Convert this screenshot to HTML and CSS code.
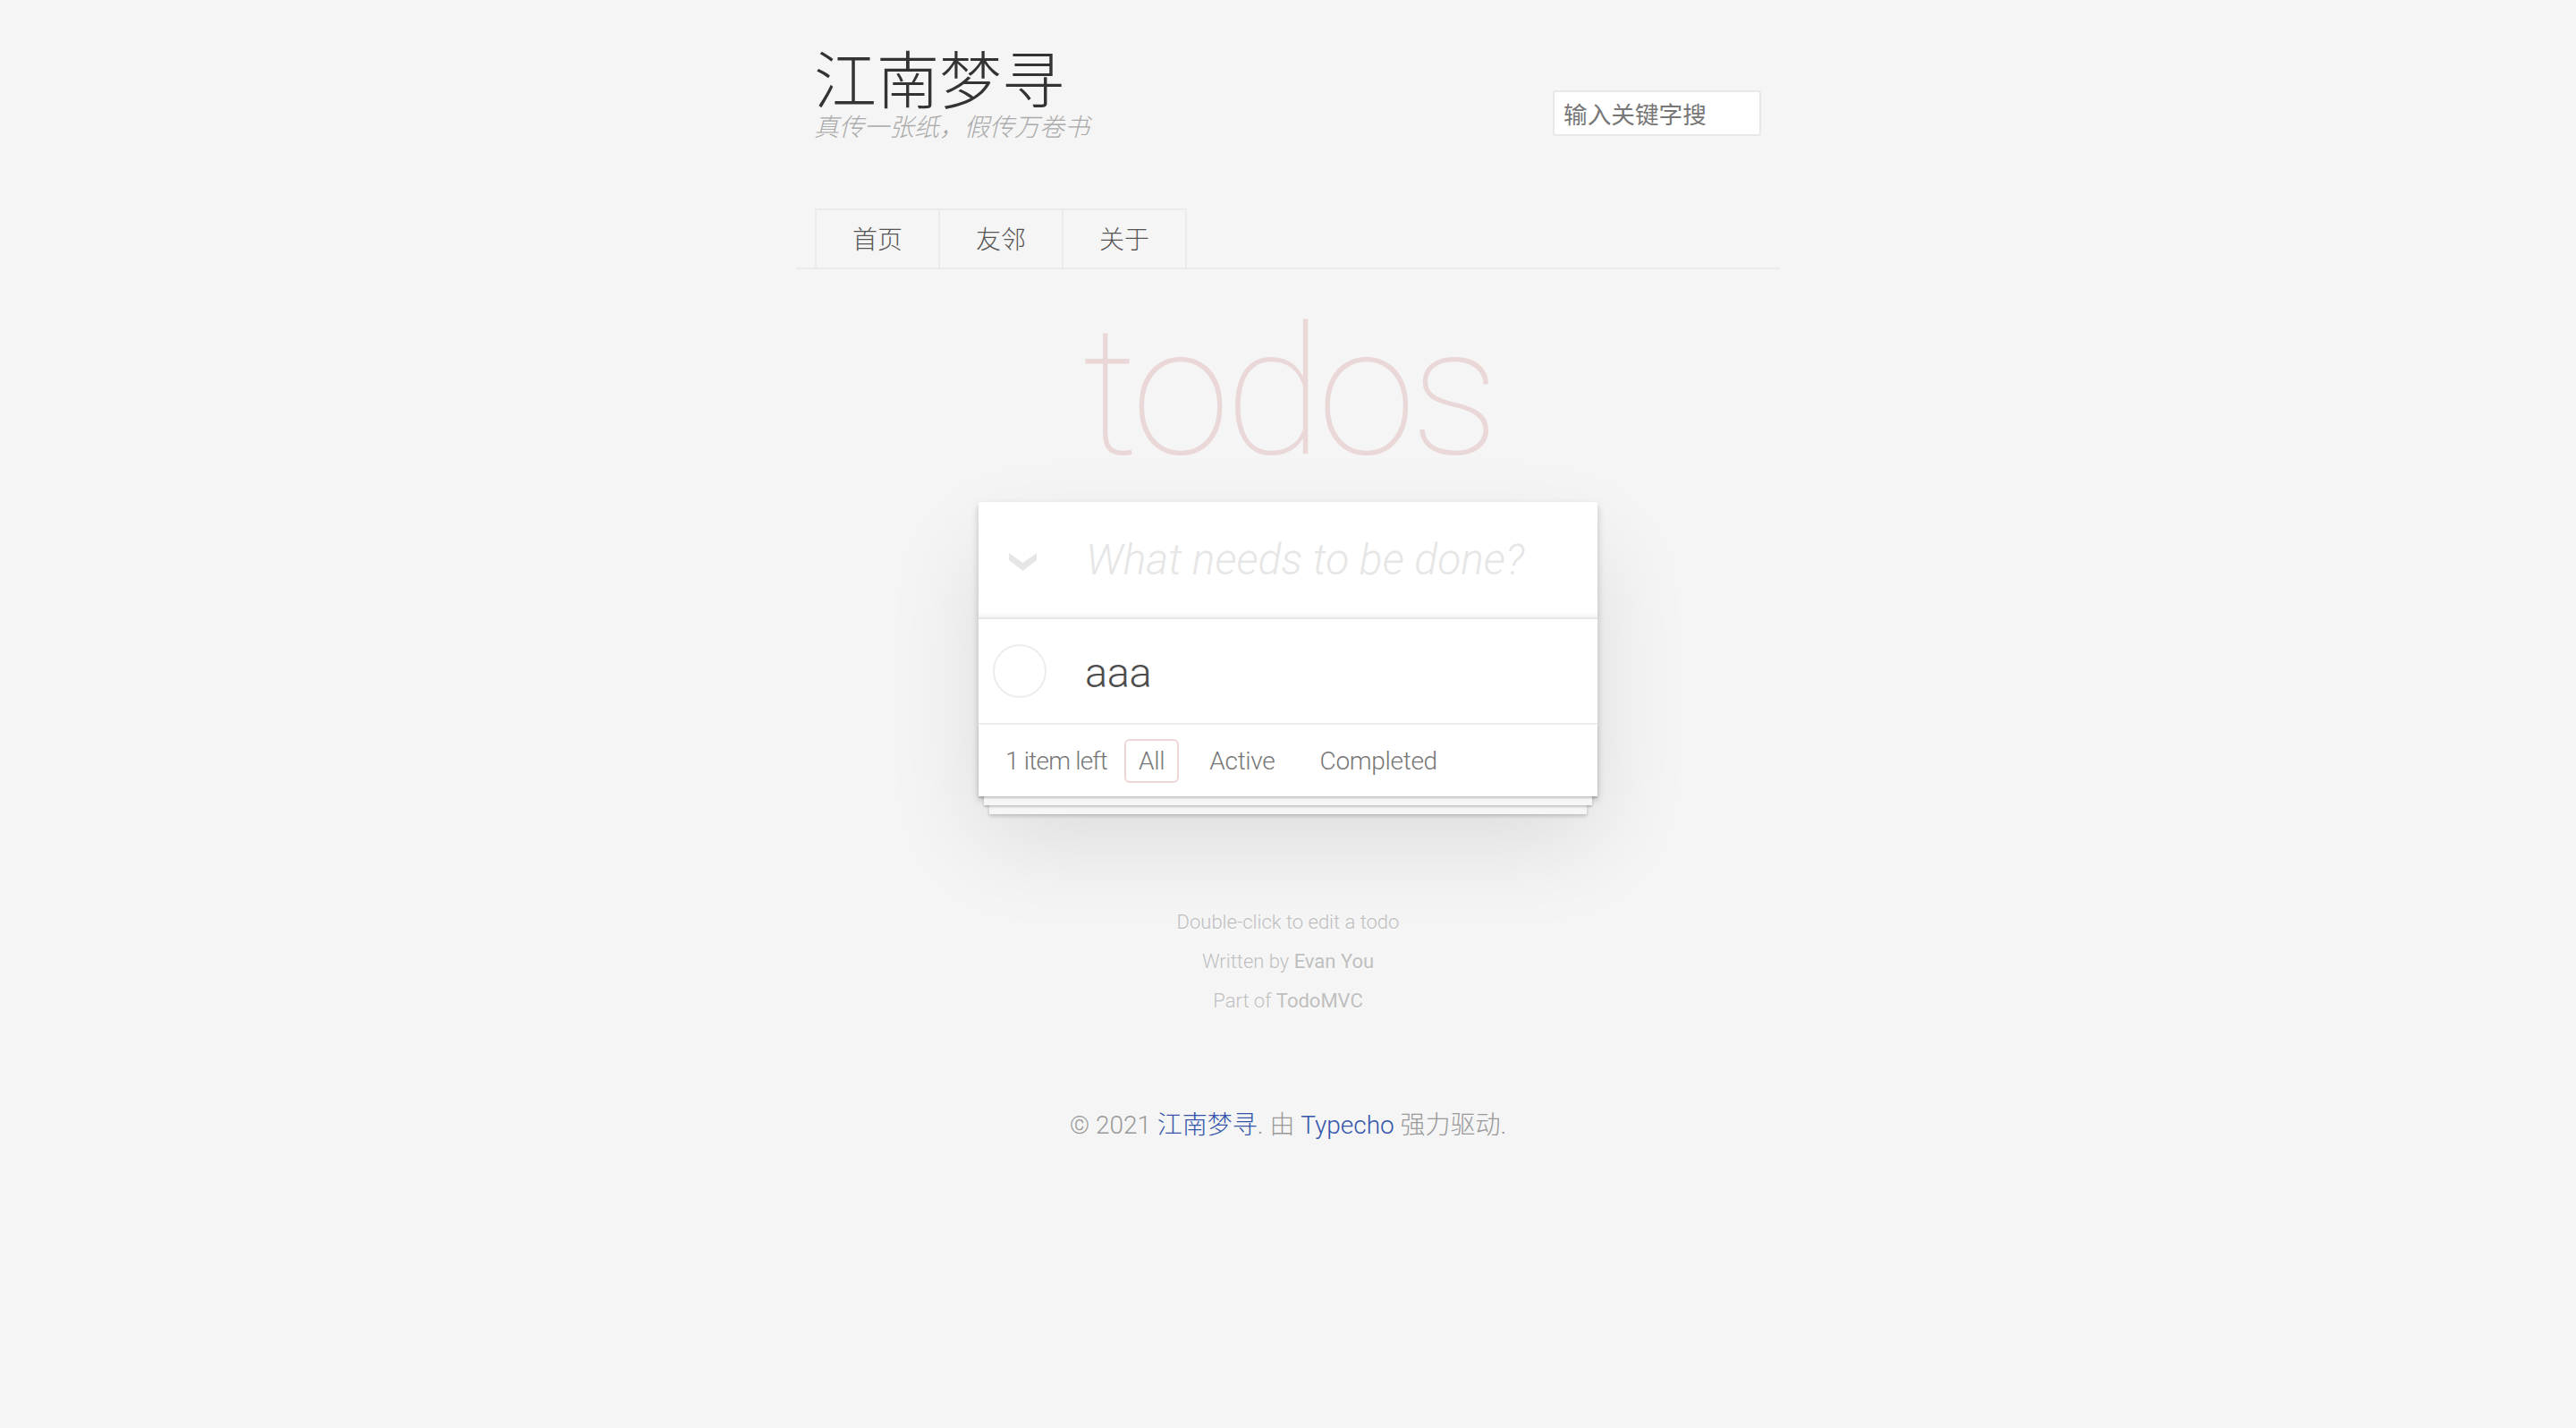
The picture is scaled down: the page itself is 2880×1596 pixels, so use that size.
FILE: index.html
```html
<!DOCTYPE html>
<html lang="zh-CN">
<head>
<meta charset="utf-8">
<title>江南梦寻</title>
<link rel="stylesheet" href="styles.css">
</head>
<body>
<header class="site-header">
  <div class="header-row">
    <div class="brand">
      <a class="logo" href="#">江南梦寻</a>
      <p class="description">真传一张纸，假传万卷书</p>
    </div>
    <form class="search">
      <input class="search-input" type="text" placeholder="输入关键字搜">
    </form>
  </div>
  <nav class="nav-menu">
    <a class="nav-item" href="#">首页</a>
    <a class="nav-item" href="#">友邻</a>
    <a class="nav-item" href="#">关于</a>
  </nav>
</header>

<main class="main">
  <h1 class="todos-title">todos</h1>
  <section class="todoapp">
    <div class="new-row">
      <svg class="toggle-all" width="31" height="20" viewBox="0 0 31 20"><polygon points="0,0 15.5,11 31,0 31,8 15.5,20 0,8" fill="#e6e6e6"/></svg>
      <input class="new-todo" type="text" placeholder="What needs to be done?">
    </div>
    <ul class="todo-list">
      <li class="todo">
        <span class="toggle"></span>
        <label class="todo-label">aaa</label>
      </li>
    </ul>
    <footer class="todo-footer">
      <span class="todo-count">1 item left</span>
      <ul class="filters">
        <li><a class="filter selected" href="#">All</a></li>
        <li><a class="filter" href="#">Active</a></li>
        <li><a class="filter" href="#">Completed</a></li>
      </ul>
      <span></span>
    </footer>
  </section>
  <div class="info">
    <p>Double-click to edit a todo</p>
    <p>Written by <a href="#">Evan You</a></p>
    <p>Part of <a href="#">TodoMVC</a></p>
  </div>
</main>

<footer class="site-footer">
  © 2021 <a class="blue" href="#">江南梦寻</a>. 由 <a class="blue" href="#">Typecho</a> 强力驱动.
</footer>
</body>
</html>
```

FILE: styles.css
```css
html, body {
  margin: 0;
  padding: 0;
}
body {
  background: #f5f5f5;
  color: #444;
  font-family: Roboto, "Noto Sans CJK SC", sans-serif;
  font-weight: 300;
}
a { text-decoration: none; }

.site-header {
  width: 1100px;
  margin: 0 auto;
  padding-top: 51px;
  border-bottom: 2px solid #ebebeb;
  box-sizing: border-box;
}
.header-row {
  display: flex;
  justify-content: space-between;
  align-items: flex-start;
  padding: 0 21px 0 20px;
}
.logo {
  display: block;
  font-family: "Noto Sans CJK SC", sans-serif;
  font-weight: 200;
  font-size: 70px;
  line-height: 70px;
  color: #333;
}
.description {
  margin: 3px 0 0;
  font-family: "Noto Sans CJK SC", sans-serif;
  font-size: 28px;
  line-height: 32px;
  font-style: italic;
  color: #aaa;
  font-weight: 200;
}
.search {
  margin: 50px 0 0;
}
.search-input {
  width: 233px;
  height: 51px;
  box-sizing: border-box;
  border: 2px solid #e8e8e8;
  border-radius: 3px;
  background: #fff;
  padding: 0 10px;
  font-family: "Noto Sans CJK SC", sans-serif;
  font-size: 26.67px;
  font-weight: 400;
  color: #777;
  outline: none;
}
.search-input::placeholder { color: #777; }

.nav-menu {
  display: flex;
  margin: 77px 0 0;
  padding: 0 0 0 21px;
}
.nav-item {
  display: block;
  height: 64px;
  line-height: 62px;
  padding: 0 40px;
  margin-right: -2px;
  border: 2px solid #ebebeb;
  border-bottom: 0;
  font-family: "Noto Sans CJK SC", sans-serif;
  font-size: 28px;
  color: #555;
  font-weight: 200;
}

.main {
  display: flex;
  flex-direction: column;
  align-items: center;
}
.todos-title {
  margin: 38px 0 22px;
  font-family: Roboto, sans-serif;
  font-weight: 100;
  font-size: 200px;
  line-height: 200px;
  color: rgba(175, 47, 47, 0.15);
  letter-spacing: -6px;
}
.todoapp {
  position: relative;
  z-index: 0;
  width: 692px;
  background: #fff;
  box-shadow: 0 4px 8px 0 rgba(0,0,0,0.2), 0 50px 100px 0 rgba(0,0,0,0.1);
}
.new-row {
  position: relative;
  height: 129px;
  box-shadow: inset 0 -4px 2px rgba(0,0,0,0.03);
}
.toggle-all {
  position: absolute;
  left: 34px;
  top: 57px;
}
.new-todo {
  display: block;
  width: 100%;
  height: 129px;
  box-sizing: border-box;
  border: 0;
  background: transparent;
  padding: 0 30px 0 120px;
  font-family: Roboto, sans-serif;
  font-size: 48px;
  font-style: italic;
  font-weight: 300;
  color: #4d4d4d;
  outline: none;
}
.new-todo::placeholder {
  color: #e6e6e6;
  font-style: italic;
  font-weight: 300;
}
.todo-list {
  list-style: none;
  margin: 0;
  padding: 0;
  border-top: 2px solid #e6e6e6;
}
.todo {
  display: flex;
  align-items: center;
  height: 116px;
  border-bottom: 2px solid #ededed;
}
.toggle {
  width: 60px;
  height: 60px;
  box-sizing: border-box;
  border: 2px solid #ededed;
  border-radius: 50%;
  margin-left: 16px;
}
.todo-label {
  margin-left: 43px;
  font-size: 47px;
  line-height: 60px;
  color: #4d4d4d;
  font-weight: 300;
  padding-top: 4px;
  letter-spacing: -0.5px;
}
.todo-footer {
  position: relative;
  display: grid;
  grid-template-columns: minmax(0, 1fr) auto minmax(0, 1fr);
  align-items: center;
  height: 80px;
  padding: 0 30px;
  color: #777;
  font-size: 28px;
}
.todo-footer::before {
  content: '';
  position: absolute;
  right: 0;
  bottom: 0;
  left: 0;
  height: 80px;
  overflow: hidden;
  z-index: -1;
  box-shadow: 0 2px 2px rgba(0,0,0,.2), 0 16px 0 -6px #f6f6f6, 0 18px 2px -6px rgba(0,0,0,.2), 0 32px 0 -12px #f6f6f6, 0 34px 4px -12px rgba(0,0,0,.2);
}
.todo-count {
  justify-self: start;
  white-space: nowrap;
  letter-spacing: -0.8px;
}
.filters {
  display: flex;
  list-style: none;
  margin: 0;
  padding: 0;
  gap: 6px;
}
.filter {
  display: block;
  margin: 6px;
  padding: 6px 14px;
  line-height: 33px;
  border: 2px solid transparent;
  border-radius: 6px;
  color: #777;
  letter-spacing: -0.3px;
}
.filter.selected { border-color: rgba(175, 47, 47, 0.2); }

.info {
  margin-top: 130px;
  color: #bfbfbf;
  font-size: 22px;
  line-height: 1;
  text-align: center;
  text-shadow: 0 2px 0 rgba(255,255,255,0.5);
}
.info p { margin: 22px 0; }
.info p:first-child { margin-top: 0; }
.info a { color: inherit; font-weight: 400; }

.site-footer {
  padding: 85px 0 80px;
  text-align: center;
  font-size: 28px;
  line-height: 42px;
  color: #999;
}
.blue { color: #3354aa; }
```
